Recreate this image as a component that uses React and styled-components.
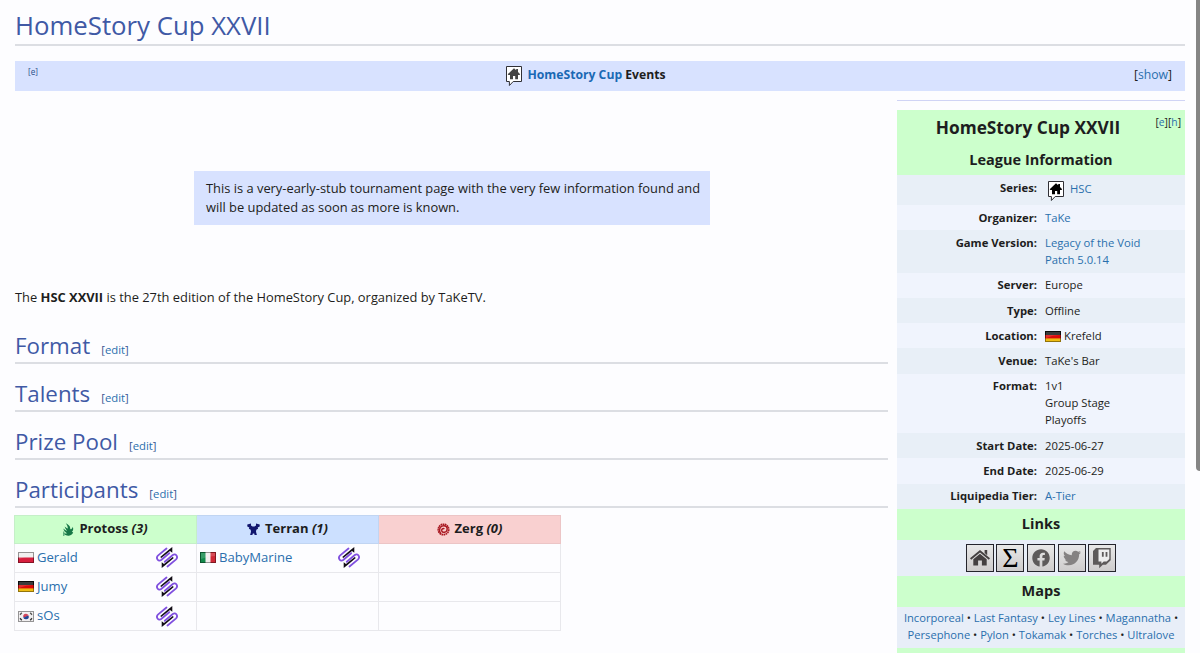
import React from "react";
import styled, { createGlobalStyle, css } from "styled-components";
import { FaFacebook, FaTwitter } from "react-icons/fa";

const GlobalStyle = createGlobalStyle`
  html,
  body {
    margin: 0;
    height: 653px;
    overflow: hidden;
    background-color: #fdfdff;
  }
`;

const Page = styled.div`
  position: relative;
  box-sizing: border-box;
  width: 1200px;
  height: 653px;
  padding: 0 15px;
  overflow: hidden;
  color: #1d1d20;
  font-family: "Open Sans", "Noto Sans", sans-serif;
  font-size: 12.88px;
  line-height: 19.5px;
`;

const ScrollThumb = styled.div`
  position: absolute;
  top: 0;
  right: -4px;
  width: 8px;
  height: 471px;
  border-radius: 0 0 4px 4px;
  background-color: #858585;
`;

const Link = styled.a`
  color: #2a6fad;
  text-decoration: none;
`;

const Title = styled.h1`
  margin: 0;
  height: 46px;
  box-sizing: border-box;
  padding-top: 8px;
  border-bottom: 2px solid #dcdee3;
  color: #4059a5;
  font-size: 25.75px;
  font-weight: 400;
  line-height: 35px;
`;

const NavBar = styled.div`
  display: grid;
  grid-template-columns: 1fr auto 1fr;
  box-sizing: border-box;
  height: 30px;
  margin-top: 15px;
  padding: 4px 13px 0;
  background-color: #d8e2ff;
`;

const NavEdit = styled.span`
  color: #2b4f88;
  font-size: 8.2px;
  line-height: 13px;
`;

const NavTitle = styled.div`
  display: flex;
  gap: 4px;
  margin-right: 29px;
  font-size: 12.2px;
  font-weight: 700;
`;

const NavName = styled.span`
  line-height: 20px;
  ${Link} {
    color: #1a69b4;
  }
`;

const NavToggle = styled.span`
  font-size: 12.2px;
  text-align: right;
`;

const Columns = styled.div`
  display: flex;
  gap: 9px;
`;

const Main = styled.main`
  width: 873px;
`;

const Notice = styled.div`
  box-sizing: border-box;
  width: 516px;
  height: 54px;
  margin: 80px 0 0 179px;
  padding: 8px 0 0 12px;
  background-color: #d8e2ff;
  line-height: 19px;
  white-space: nowrap;
`;

const Intro = styled.p`
  margin: 63px 0 0;
`;

const Heading = styled.h2`
  display: flex;
  align-items: baseline;
  gap: 11px;
  box-sizing: border-box;
  height: 34px;
  margin: ${(props) => (props.$first ? "22px" : "14px")} 0 0;
  border-bottom: 2px solid #dcdee3;
  color: #4059a5;
  font-size: 22.35px;
  font-weight: 400;
  line-height: 32px;
`;

const HeadingEdit = styled.span`
  color: #39568f;
  font-size: 11.3px;
`;

const Participants = styled.table`
  width: 547px;
  margin: 7px 0 0 -1px;
  table-layout: fixed;
  border-collapse: collapse;
`;

const RaceHead = styled.th`
  box-sizing: border-box;
  height: 28px;
  padding: 0;
  border: 1px solid ${(props) => props.$border};
  background-color: ${(props) => props.$color};
  font-size: 13px;
`;

const RaceTitle = styled.div`
  display: flex;
  justify-content: center;
  align-items: center;
  gap: 5px;
  height: 27px;
`;

const PlayerCell = styled.td`
  box-sizing: border-box;
  height: 29.3px;
  padding: 0 18px 0 3px;
  border: 1px solid #e8e8ec;
`;

const Player = styled.div`
  display: flex;
  align-items: center;
  gap: 3px;
  height: 28px;
  font-size: 13.1px;

  > :last-child {
    margin-left: auto;
  }
`;

const Sidebar = styled.aside`
  width: 288px;
  margin-top: 9px;
  border-top: 1px solid #d0d4f5;
`;

const Infobox = styled.div`
  margin-top: 9px;
  font-size: 11.27px;
  line-height: 16.9px;
`;

const InfoTitle = styled.div`
  position: relative;
  height: 35px;
  background-color: #ccffcc;
  font-size: 17.3px;
  font-weight: 700;
  line-height: 36px;
  text-align: center;
  text-indent: -26px;
`;

const InfoEdit = styled.span`
  position: absolute;
  top: 4px;
  right: 4px;
  font-size: 10.3px;
  font-weight: 400;
  line-height: 16px;
  text-indent: 0;
`;

const InfoHeader = styled.div`
  box-sizing: border-box;
  height: ${(props) => (props.$tall ? "30px" : "31px")};
  background-color: #ccffcc;
  font-size: 14.5px;
  font-weight: 700;
  line-height: 30px;
  text-align: center;
`;

const InfoRow = styled.div`
  display: grid;
  grid-template-columns: 140px 1fr;
  column-gap: 8px;
  padding: 4.7px 0 3.73px;
  background-color: ${(props) => (props.$dark ? "#e8eff7" : "#f0f4fd")};
  ${(props) =>
    props.$series &&
    css`
      box-sizing: border-box;
      height: 30px;
    `}
`;

const InfoLabel = styled.div`
  font-weight: 700;
  text-align: right;
`;

const InfoValue = styled.div`
  display: flex;
  flex-direction: column;
`;

const Inline = styled.span`
  display: flex;
  align-items: ${(props) => (props.$top ? "flex-start" : "center")};
  gap: ${(props) => (props.$top ? "5px" : "3px")};
  padding-left: ${(props) => (props.$top ? "2px" : "0")};
`;

const SeriesLink = styled(Link)`
  padding-top: 1px;
`;

const LinkIcons = styled.div`
  display: flex;
  justify-content: center;
  align-items: center;
  gap: 2.6px;
  height: 36px;
  background-color: #e8eef8;
`;

const IconButton = styled.span`
  display: flex;
  justify-content: center;
  align-items: center;
  box-sizing: border-box;
  width: 28px;
  height: 28px;
  border: 1px solid #24242c;
  background: linear-gradient(#e8e8e8, #cecccc);
  color: #5d5a5a;
`;

const Sigma = styled.span`
  color: #000;
  font-family: "Liberation Serif", serif;
  font-size: 28px;
  line-height: 26px;
`;

const MapList = styled.div`
  height: 41px;
  box-sizing: border-box;
  padding-top: 3.6px;
  background-color: #e8eef8;
  font-size: 11.17px;
  text-align: center;
  white-space: nowrap;
`;

const FlagSvg = styled.svg`
  flex: none;
  width: 16px;
  height: 11px;
`;

function Flag({ country }) {
  return (
    <FlagSvg viewBox="0 0 16 11">
      {country === "de" && (
        <>
          <rect width="16" height="4" fill="#161616" />
          <rect y="4" width="16" height="4" fill="#dc0909" />
          <rect y="7.4" width="16" height="3.6" fill="#eebc12" />
        </>
      )}
      {country === "pl" && (
        <>
          <rect width="16" height="6" fill="#f0eeee" />
          <rect y="5.5" width="16" height="5.5" fill="#d71e3d" />
        </>
      )}
      {country === "it" && (
        <>
          <rect width="16" height="11" fill="#f1eeee" />
          <rect width="5.5" height="11" fill="#13894b" />
          <rect x="10.5" width="5.5" height="11" fill="#cf2937" />
        </>
      )}
      {country === "kr" && (
        <>
          <rect width="16" height="11" fill="#f1eff0" />
          <path d="M5.2 5.8a2.8 2.8 0 0 1 5.6-.6Q9 4.3 8 5.5t-2.8.3" fill="#cb2740" />
          <path d="M10.8 5.2a2.8 2.8 0 0 1-5.6.6Q7 6.7 8 5.5t2.8-.3" fill="#214594" />
          <path
            d="m2 3.7 1.8-2M12.2 1.7l1.8 2M2 7.3l1.8 2M12.2 9.3l1.8-2"
            stroke="#333"
            strokeWidth="1.3"
          />
        </>
      )}
      <rect
        x=".5"
        y=".5"
        width="15"
        height="10"
        fill="none"
        stroke="#000"
        strokeOpacity=".38"
      />
      <path d="M1 1h14v3Q8 4 1 7z" fill="#fff" opacity=".16" />
    </FlagSvg>
  );
}

function CupIcon({ color = "#000" }) {
  return (
    <svg width="18" height="22" viewBox="0 0 18 22">
      <path d="M1.5 1.5h15v15H8.2l-3.8 4v-4H1.5z" fill="#fff" stroke="#303036" />
      <path
        d="m9 3.2 2.2 2V4h1.8v3l2.2 2.2-.7.8H13v4.3h-2.8V11H8v3.3H5V10H3.4l-.7-.8z"
        fill={color}
      />
    </svg>
  );
}

function TeamIcon() {
  return (
    <svg width="22" height="21" viewBox="0 0 22 21">
      <g fill="none" stroke="#8050df" strokeWidth="1.8" strokeLinecap="round">
        <path d="M10.5 1.5 2.2 8.4c-2.9 2.6.1 6.8 3 4.6l8-6.8" />
        <path d="m11.5 19.5 8.3-6.9c2.9-2.6-.1-6.8-3-4.6l-8 6.8" />
      </g>
      <path d="M16.3 0v5.8L14 3.9l-8.7 7.2-1.1-1.2 8.6-7.2z" fill="#120d16" />
      <path d="M5.7 21v-5.8L8 17.1l8.7-7.2 1.1 1.2-8.6 7.2z" fill="#120d16" />
    </svg>
  );
}

function ProtossIcon() {
  return (
    <svg width="11" height="13" viewBox="0 0 11 13" fill="#177847">
      <path d="M2.8.3C5.2 1.7 7.5 3 7.2 5.2c-.1 1 .5 1.4 1.2.8.8-.7 1.2-1.4 1.4-2.2.9 2.7.2 4-1 5.1l1.4.3c-.5 1.8-2 3.3-4.4 3.5C3.6 12.8 1.3 11.8.5 10.2c1.2.5 2.4.5 3.5.1C2 9.2.7 7.7.4 5.6c1.2 1.3 2.3 2 3.7 2.3C3 6.6 2 5.3 1.7 3.6c1.1 1.1 2 1.6 3.2 2C4.8 3.7 4 2 2.8.3" />
      <path d="M.8 8.5V13" stroke="#177847" strokeWidth=".8" />
    </svg>
  );
}

function TerranIcon() {
  return (
    <svg width="13" height="13" viewBox="0 0 13 13" fill="#12166e">
      <path d="M.3 1.5 4 .6v1.8L5.5 3.6h2L9 2.4V.6l3.7.9v2.1l-2 .9.4 1.3-1.8 1L9 8.8l.9 3.2H7.6l-.4-1.6H5.8L5.4 12H3.1L4 8.8l-.3-2-1.8-1 .4-1.3-2-.9z" />
    </svg>
  );
}

function ZergIcon() {
  return (
    <svg width="13" height="13" viewBox="0 0 13 13" fill="none" stroke="#a91720">
      <circle cx="6.5" cy="6.5" r="5.2" strokeWidth="1.8" strokeDasharray="1.6 .5" />
      <path
        d="M4 10.8C1.8 8.8 2 4.3 5 3.1c3.2-1.4 6 1 5 4-.8 2.7-4.5 3-5.2.8-.5-1.8 1.2-3 2.6-2"
        strokeWidth="1.5"
      />
    </svg>
  );
}

function HomeIcon() {
  return (
    <svg width="22" height="20" viewBox="0 0 22 20" fill="#444041">
      <path d="m1 10.2 10-8.3 10 8.3-1.2 1.5L11 4.5l-8.8 7.2zM15.6 2h2.6v5.2l-2.6-2.1z" />
      <path d="m4.3 11.2 6.7-5.5 6.7 5.5v6.4h-4.8v-5H9.1v5H4.3z" />
    </svg>
  );
}

function TwitchIcon() {
  return (
    <svg width="20" height="22" viewBox="0 0 20 22">
      <path d="M1 4 4 1h14.7v12.2L14 17.7h-3.2l-3.6 3.5v-3.5H1z" fill="#5d5a5a" />
      <path d="M6.5 2.5h10.8v9.6l-2.6 2.4h-3l-2.3 2.2v-2.2H6.5z" fill="#eee" />
      <path d="M9.9 5h1.8v4.7H9.9zM13.6 5h1.8v4.7h-1.8z" fill="#5d5a5a" />
    </svg>
  );
}

const sections = ["Format", "Talents", "Prize Pool", "Participants"];

const races = [
  {
    name: "Protoss",
    count: 3,
    color: "#ccffcc",
    border: "#c5efc8",
    Icon: ProtossIcon
  },
  {
    name: "Terran",
    count: 1,
    color: "#cce0ff",
    border: "#c1d5f2",
    Icon: TerranIcon
  },
  {
    name: "Zerg",
    count: 0,
    color: "#f9d0d0",
    border: "#ecc5c6",
    Icon: ZergIcon
  }
];

const playerRows = [
  [{ name: "Gerald", country: "pl" }, { name: "BabyMarine", country: "it" }, null],
  [{ name: "Jumy", country: "de" }, null, null],
  [{ name: "sOs", country: "kr" }, null, null]
];

const details = [
  { label: "Organizer", links: ["TaKe"] },
  { label: "Game Version", links: ["Legacy of the Void", "Patch 5.0.14"] },
  { label: "Server", values: ["Europe"] },
  { label: "Type", values: ["Offline"] },
  { label: "Location", values: ["Krefeld"], country: "de" },
  { label: "Venue", values: ["TaKe's Bar"] },
  { label: "Format", values: ["1v1", "Group Stage", "Playoffs"] },
  { label: "Start Date", values: ["2025-06-27"] },
  { label: "End Date", values: ["2025-06-29"] },
  { label: "Liquipedia Tier", links: ["A-Tier"] }
];

const mapLines = [
  ["Incorporeal", "Last Fantasy", "Ley Lines", "Magannatha"],
  ["Persephone", "Pylon", "Tokamak", "Torches", "Ultralove"]
];

function App() {
  return (
    <>
      <GlobalStyle />
      <Page>
        <Title>HomeStory Cup XXVII</Title>
        <NavBar>
          <NavEdit>[e]</NavEdit>
          <NavTitle>
            <CupIcon color="#444" />
            <NavName>
              <Link>HomeStory Cup</Link> Events
            </NavName>
          </NavTitle>
          <NavToggle>
            [<Link>show</Link>]
          </NavToggle>
        </NavBar>
        <Columns>
          <Main>
            <Notice>
              This is a very-early-stub tournament page with the very few
              information found and
              <br />
              will be updated as soon as more is known.
            </Notice>
            <Intro>
              The <b>HSC XXVII</b> is the 27th edition of the HomeStory Cup,
              organized by TaKeTV.
            </Intro>
            {sections.map((section, i) => (
              <Heading key={section} $first={i === 0}>
                {section}
                <HeadingEdit>
                  [<Link>edit</Link>]
                </HeadingEdit>
              </Heading>
            ))}
            <Participants>
              <thead>
                <tr>
                  {races.map(({ name, count, color, border, Icon }) => (
                    <RaceHead key={name} $color={color} $border={border}>
                      <RaceTitle>
                        <Icon />
                        <span>
                          {name} <i>({count})</i>
                        </span>
                      </RaceTitle>
                    </RaceHead>
                  ))}
                </tr>
              </thead>
              <tbody>
                {playerRows.map((row, i) => (
                  <tr key={i}>
                    {row.map((player, j) => (
                      <PlayerCell key={j}>
                        {player && (
                          <Player>
                            <Flag country={player.country} />
                            <Link>{player.name}</Link>
                            <TeamIcon />
                          </Player>
                        )}
                      </PlayerCell>
                    ))}
                  </tr>
                ))}
              </tbody>
            </Participants>
          </Main>
          <Sidebar>
            <Infobox>
              <InfoTitle>
                HomeStory Cup XXVII
                <InfoEdit>
                  [<Link>e</Link>][<Link>h</Link>]
                </InfoEdit>
              </InfoTitle>
              <InfoHeader $tall>League Information</InfoHeader>
              <InfoRow $series $dark>
                <InfoLabel>Series:</InfoLabel>
                <InfoValue>
                  <Inline $top>
                    <CupIcon />
                    <SeriesLink>HSC</SeriesLink>
                  </Inline>
                </InfoValue>
              </InfoRow>
              {details.map(({ label, links, values, country }, i) => (
                <InfoRow key={label} $dark={i % 2 === 1}>
                  <InfoLabel>{label}:</InfoLabel>
                  <InfoValue>
                    {links && links.map((text) => <Link key={text}>{text}</Link>)}
                    {values &&
                      values.map((text) => (
                        <Inline key={text}>
                          {country && <Flag country={country} />}
                          {text}
                        </Inline>
                      ))}
                  </InfoValue>
                </InfoRow>
              ))}
              <InfoHeader>Links</InfoHeader>
              <LinkIcons>
                <IconButton>
                  <HomeIcon />
                </IconButton>
                <IconButton>
                  <Sigma>Σ</Sigma>
                </IconButton>
                <IconButton>
                  <FaFacebook size={18} />
                </IconButton>
                <IconButton>
                  <FaTwitter size={18} color="#858282" />
                </IconButton>
                <IconButton>
                  <TwitchIcon />
                </IconButton>
              </LinkIcons>
              <InfoHeader>Maps</InfoHeader>
              <MapList>
                {mapLines.map((line, i) => (
                  <div key={i}>
                    {line.map((map, j) => (
                      <React.Fragment key={map}>
                        <Link>{map}</Link>
                        {(i === 0 || j < line.length - 1) && " • "}
                      </React.Fragment>
                    ))}
                  </div>
                ))}
              </MapList>
              <InfoHeader />
            </Infobox>
          </Sidebar>
        </Columns>
        <ScrollThumb />
      </Page>
    </>
  );
}

export default App;
